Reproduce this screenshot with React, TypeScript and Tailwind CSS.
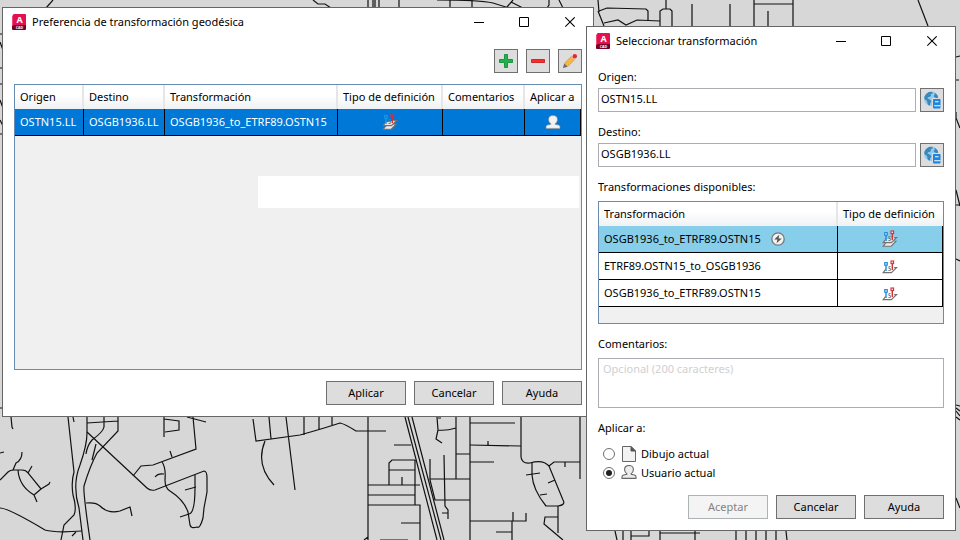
import React from "react";

const roads = [
    // top edge
    "M53 0L46 8", "M313 0L318 4L325 4L331 8", "M368 0V8M373 0V8M375 0V8M379 0V8M399 0V8M450 0V8M472 0V8",
    "M437 0Q480 0 493 3L509 8M513 0L507 7M511 2L523 8M549 0V5L547 8M559 0L563 8M598 0L599 12",
    "M598 11L604 26M599 11L607 8L646 9L648 11V20M604 23L618 20L626 25L637 20L660 21",
    "M660 26V11L663 9H670L672 11V26M666 0V9M692 4V26M730 4V26M754 0V26M768 11V26M793 0V26M754 4H793M918 0L928 26",
    // left and right edges
    "M0 34H3M0 42L3 50M0 68H3M0 84H3M0 100L3 108M0 120L3 126M0 134H3M0 408H3",
    "M956 57L960 56M956 80H959M956 112V118L960 128M956 190L960 206M956 205H960M956 259L960 261M956 405L960 406M956 408L960 411M956 411L960 416M956 417L960 420M956 498L960 508",
    // bottom left
    "M11 417L12 427L13 429M0 453L4 452M0 480L8 472Q10 470 14 470H22Q26 470 28 473L41 489L49 484L50 482M41 489L34 495Q19 486 18 470M13 470L16 463Q22 460 22 452M28 473L32 466M34 495L37 502",
    "M0 508Q8 508 45 530Q55 533 82 531M61 540L64 525L74 515Q77 508 73 495Q71 482 74 472L68 417M73 417L74 422M72 536L76 532",
    "M87 417V433Q87 445 80 465Q72 485 79 508L83 540M118 417V431L97 453Q90 466 84 486Q83 492 90 540M104 417V427Q103 432 92 440Q87 446 86 454M87 423L118 421M96 444L92 460",
    "M87 432L147 488Q150 491 155 490L204 471Q207 471 207 478L207 492L204 508L203 518Q200 529 197 527Q191 529 190 525L188 512Q184 500 170 491Q165 488 165 480Q166 467 162 462",
    "M133 476L141 466L153 465L196 449L193 417M170 451L172 457M155 477Q158 473 164 474M195 475V488Q195 513 189 514L180 517M185 490L196 487M187 417L206 422M164 417V437M164 419L179 421V430L165 432",
    "M86 503Q96 502 100 506Q108 514 120 511L130 507L132 516",
    "M253 419L256 441L300 435Q325 428 340 423Q345 424 356 431H386M269 417L271 439M286 417L295 490M265 441Q255 465 274 485M304 417V435M319 417V430M332 417V425",
    // bottom middle
    "M368 417V540M405 417L437 540M408 417L441 540M412 417L444 540M394 445H411M415 460H392L389 463V485M389 470H415M415 460V505M368 485H420M402 477V485M368 495H415M368 505H420V540M401 523H420M364 540L368 537M380 540H408",
    "M437 417L438 430Q446 431 456 428M438 430L436 439L442 443M438 418H441M456 417V479M456 454H470M470 417V540M430 459V480L435 500H470M430 479H470M444 455L445 506L448 510V519M442 513H448",
    "M470 423H515M470 445L521 446M488 441V446M470 462H494M470 521H526V513M512 521V540M513 512V521M496 532H512M521 417V457Q522 464 530 463Q543 459 549 466L563 500Q566 505 558 506H546Q533 490 532 475V463",
    "M549 466L554 462H580M565 462V467M580 417V479M558 506V533M558 517H545L544 524L563 540M526 475L540 473M548 483L555 480M540 495L547 494",
    // under the second window
    "M615 531L617 540M623 531V540M631 531V540M631 536H649V531M660 531V540M660 533H700M695 531V540M736 531V540M746 531V540M756 531V540M766 531V540M776 531V540M786 531L787 540",
];

const AppIcon = () => (
    <svg width="14" height="16" viewBox="0 0 14 16" aria-hidden="true">
        <path d="M0 2L2 0V13L0 14Z" fill="#f0487a" />
        <path d="M2 0H13Q14 0 14 1V11H1V1Z" fill="#e51050" />
        <path d="M0 12L2 11H14V15Q14 16 13 16H1Q0 16 0 15Z" fill="#780024" />
        <text x="7.5" y="9" textAnchor="middle" fontFamily="Noto Sans, sans-serif" fontWeight="700" fontSize="9" fill="#fff">A</text>
        <text x="7.5" y="14.8" textAnchor="middle" fontFamily="Noto Sans, sans-serif" fontWeight="700" fontSize="3.6" fill="#fff">CAD</text>
    </svg>
);

const TypeIcon = ({ layers, selected }: { layers?: boolean; selected?: boolean }) => (
    <svg className="inline-block align-middle" width="16" height={layers ? 18 : 14} viewBox={layers ? "0 0 16 18" : "0 0 16 14"} fill="none" aria-hidden="true">
        {layers && <path d="M3.6 13.4L1.2 16.2H9.2L14 11.2H12.5" fill="#eee" stroke="#77706c" strokeWidth="1.1" />}
        <path d="M3.5 9.5L1.2 12.6H9.4L14.6 7.6H12.2" fill={layers ? "#e6e6e6" : "#fff"} stroke="#77706c" strokeWidth="1.2" />
        <path d="M8.6 6.5H6.9V8.5H8.4V10.5H6.4" stroke="#777" strokeWidth="0.9" />
        <path d="M4 5V11" stroke={selected ? "#1c97ea" : "#1e88e0"} strokeWidth="1.4" />
        <rect x="2.7" y="2.6" width="2.6" height="2.6" fill={selected ? "#0078d7" : "#cfe8fa"} stroke={selected ? "#1c97ea" : "#1e88e0"} strokeWidth="1.1" />
        <path d="M10.3 4V10" stroke="#d13438" strokeWidth="1.4" />
        <rect x="9" y="1" width="2.6" height="2.6" fill={selected ? "#0078d7" : "#f9dcdc"} stroke="#d13438" strokeWidth="1.1" />
    </svg>
);

const UserIcon = ({ light }: { light?: boolean }) => (
    <svg className="inline-block align-middle" width="16" height="16" viewBox="0 1 16 16" aria-hidden="true">
        <path
            d="M8 1.5C5.2 1.5 3.6 3 3.6 5.4C3.6 7.4 4.6 8.8 5.8 9.6V10.4L2.6 11Q1 11.4 1 12.8V14.4H15V12.8Q15 11.4 13.4 11L10.2 10.4V9.6C11.4 8.8 12.4 7.4 12.4 5.4C12.4 3 10.8 1.5 8 1.5Z"
            fill={light ? "#f2f2f2" : "#ececec"}
            stroke={light ? "#9b8f86" : "#666"}
            strokeWidth={light ? "0.6" : "1.1"}
        />
    </svg>
);

const PageIcon = () => (
    <svg width="16" height="16" viewBox="0 0 16 16" aria-hidden="true">
        <path d="M1.5 0.5H10L14.5 5V15.5H1.5Z" fill="#f2f2f2" stroke="#666" />
        <path d="M10 0.5V5H14.5Z" fill="#555" stroke="#555" />
    </svg>
);

const GlobeIcon = () => (
    <svg width="18" height="18" viewBox="0 0 18 18" className="shrink-0" aria-hidden="true">
        <circle cx="8.2" cy="7.8" r="7.2" fill="#8ecbf4" />
        <path d="M1.2 6.2Q2.4 2.4 6 0.9L9.4 0.7L9.6 2.4L7.4 3.2L8.2 4.6L6.6 6L5 6.2L4.4 7.6L6.8 8.6L8.4 10.2L7.4 12L6.8 14.8Q4.6 14.2 4.4 12L4 9.8L1.8 8.4Z" fill="#3d87b5" />
        <path d="M11.4 1.4Q14.4 3 15.2 6.4L13.6 7.2L12 6.4L10.6 5.2L11.8 3.6Z" fill="#3d87b5" />
        <rect x="9" y="7" width="9" height="11" fill="#dcdcdc" />
        <rect x="10" y="8" width="7.5" height="9.4" rx="0.8" fill="#1a86e0" />
        <path d="M12 10.8H15.6M11.2 14.8H17.5" stroke="#fff" strokeWidth="1.1" />
    </svg>
);

const AutoIcon = () => (
    <svg width="14" height="14" viewBox="0 0 14 14" aria-hidden="true">
        <circle cx="7" cy="7" r="6.2" fill="#f2f2f2" stroke="#777" strokeWidth="1.3" />
        <path d="M8.3 2.8L3.2 7.6H6.4L5.6 11.2L10.8 6.4H7.6Z" fill="#555" />
    </svg>
);

const TitleBar = ({ title }: { title: string }) => (
    <header className="flex h-7 items-center pl-[9px]">
        <AppIcon />
        <h1 className="ml-[6px] grow">{title}</h1>
        <button aria-label="Minimizar" className="flex h-7 w-[46px] items-center justify-center">
            <svg width="11" height="11" viewBox="0 0 11 11"><path d="M1 5.5H11" stroke="#000" /></svg>
        </button>
        <button aria-label="Maximizar" className="flex h-7 w-[46px] items-center justify-center">
            <svg width="11" height="11" viewBox="0 0 11 11"><path d="M0.5 0.5H9.5V9.5H0.5Z" fill="none" stroke="#000" /></svg>
        </button>
        <button aria-label="Cerrar" className="flex h-7 w-[46px] items-center justify-center">
            <svg width="11" height="11" viewBox="0 0 11 11"><path d="M0.3 0.3L9.7 9.7M9.7 0.3L0.3 9.7" stroke="#000" strokeWidth="1.1" /></svg>
        </button>
    </header>
);

const iconButton = "flex size-6 shrink-0 items-center justify-center border border-[#707070] bg-[#dddddd]";
const button = "h-6 w-20 border border-[#707070] bg-[#dddddd] text-center disabled:border-[#adb2b5] disabled:bg-[#f4f4f4] disabled:text-[#838383]";
const th = "h-6 border-r-2 border-[#e6e6e8] pl-[5px] text-left font-normal last:border-r-0";
const td = "h-[27px] border-r border-b border-black";

const App = () => {
    return (
        <div className="relative min-h-screen overflow-hidden bg-[#d7d7d7] font-['Noto_Sans',sans-serif] text-[11px] leading-4 text-black">
            <svg className="absolute inset-0 size-full" viewBox="0 0 960 540" preserveAspectRatio="xMidYMid slice" fill="none" stroke="#111" strokeWidth="1.2" aria-hidden="true">
                {roads.map((d) => (
                    <path key={d} d={d} />
                ))}
            </svg>

            <section className="absolute top-[7px] left-[2px] w-[592px] border border-[#666] bg-white">
                <TitleBar title="Preferencia de transformación geodésica" />
                <div className="px-[11px] pt-[13px] pb-[11px]">
                    <div className="flex justify-end gap-2">
                        <button className={iconButton} aria-label="Añadir">
                            <svg width="14" height="14" viewBox="0 0 14 14">
                                <path d="M5.5 0.5H8.5V5.5H13.5V8.5H8.5V13.5H5.5V8.5H0.5V5.5H5.5Z" fill="#22b14c" stroke="#1d9540" />
                            </svg>
                        </button>
                        <button className={iconButton} aria-label="Quitar">
                            <svg width="14" height="14" viewBox="0 0 14 14">
                                <path d="M0.5 5.5H13.5V8.5H0.5Z" fill="#ff2a2a" stroke="#cf2a2a" />
                            </svg>
                        </button>
                        <button className={iconButton} aria-label="Editar">
                            <svg width="14" height="14" viewBox="0 0 14 14">
                                <path d="M0 14L1.2 9.5L4.5 12.8Z" fill="#666" />
                                <path d="M1.4 9.3L8.6 2.2L11.8 5.4L4.7 12.6Z" fill="#f7b544" stroke="#c48f35" strokeWidth="0.6" />
                                <path d="M8.6 2.2L9.6 1.2L12.8 4.4L11.8 5.4Z" fill="#e4e4e4" />
                                <circle cx="11.8" cy="2.2" r="2.2" fill="#e8262c" />
                            </svg>
                        </button>
                    </div>

                    <div className="mt-[11px] h-[286px] border border-[#688caf] bg-[#f0f0f0]">
                        <table className="w-full table-fixed border-separate border-spacing-0 whitespace-nowrap">
                            <colgroup>
                                <col className="w-[69px]" />
                                <col className="w-[81px]" />
                                <col className="w-[173px]" />
                                <col className="w-[105px]" />
                                <col className="w-[82px]" />
                                <col />
                            </colgroup>
                            <thead className="bg-linear-to-b from-white from-40% to-[#f0f1f3]">
                                <tr>
                                    <th scope="col" className={th}>Origen</th>
                                    <th scope="col" className={th}>Destino</th>
                                    <th scope="col" className={th}>Transformación</th>
                                    <th scope="col" className={th}>Tipo de definición</th>
                                    <th scope="col" className={th}>Comentarios</th>
                                    <th scope="col" className={th}>Aplicar a</th>
                                </tr>
                            </thead>
                            <tbody>
                                <tr className="bg-[#0078d7] text-white">
                                    <td className={`${td} pl-[5px]`}>OSTN15.LL</td>
                                    <td className={`${td} pl-[5px]`}>OSGB1936.LL</td>
                                    <td className={`${td} pl-[5px]`}>OSGB1936_to_ETRF89.OSTN15</td>
                                    <td className={`${td} text-center`}><TypeIcon layers selected /></td>
                                    <td className={td}></td>
                                    <td className={`${td} text-center`}><UserIcon light /></td>
                                </tr>
                            </tbody>
                        </table>
                        <div className="mt-10 mr-[2px] ml-[243px] h-8 bg-white"></div>
                    </div>

                    <div className="mt-[11px] flex justify-end gap-2">
                        <button className={button}>Aplicar</button>
                        <button className={button}>Cancelar</button>
                        <button className={button}>Ayuda</button>
                    </div>
                </div>
            </section>

            <section className="absolute top-[26px] left-[586px] w-[370px] border border-[#666] bg-white">
                <TitleBar title="Seleccionar transformación" />
                <div className="px-[11px] pt-[14px] pb-[11px]">
                    <label htmlFor="origen" className="block">Origen:</label>
                    <div className="mt-[3px] flex gap-1">
                        <input id="origen" defaultValue="OSTN15.LL" className="h-6 min-w-0 grow border border-[#abadb3] px-[2px] pb-1" />
                        <button className={iconButton} aria-label="Elegir origen"><GlobeIcon /></button>
                    </div>

                    <label htmlFor="destino" className="mt-3 block">Destino:</label>
                    <div className="mt-[3px] flex gap-1">
                        <input id="destino" defaultValue="OSGB1936.LL" className="h-6 min-w-0 grow border border-[#abadb3] px-[2px] pb-1" />
                        <button className={iconButton} aria-label="Elegir destino"><GlobeIcon /></button>
                    </div>

                    <h2 id="disponibles" className="mt-3">Transformaciones disponibles:</h2>
                    <div className="mt-[6px] border border-[#688caf] bg-[#f0f0f0] pb-4">
                        <table aria-labelledby="disponibles" className="w-full table-fixed border-separate border-spacing-0 whitespace-nowrap">
                            <colgroup>
                                <col />
                                <col className="w-[105px]" />
                            </colgroup>
                            <thead className="bg-linear-to-b from-white from-40% to-[#f0f1f3]">
                                <tr>
                                    <th scope="col" className={th}>Transformación</th>
                                    <th scope="col" className={th}>Tipo de definición</th>
                                </tr>
                            </thead>
                            <tbody>
                                <tr className="bg-[#87ceeb]">
                                    <td className={`${td} pl-[5px]`}>
                                        <div className="flex items-center gap-[10px]">OSGB1936_to_ETRF89.OSTN15 <AutoIcon /></div>
                                    </td>
                                    <td className={`${td} text-center`}><TypeIcon layers /></td>
                                </tr>
                                <tr className="bg-white">
                                    <td className={`${td} pl-[5px]`}>ETRF89.OSTN15_to_OSGB1936</td>
                                    <td className={`${td} text-center`}><TypeIcon /></td>
                                </tr>
                                <tr className="bg-white">
                                    <td className={`${td} pl-[5px]`}>OSGB1936_to_ETRF89.OSTN15</td>
                                    <td className={`${td} text-center`}><TypeIcon /></td>
                                </tr>
                            </tbody>
                        </table>
                    </div>

                    <label htmlFor="comentarios" className="mt-3 block">Comentarios:</label>
                    <textarea
                        id="comentarios"
                        placeholder="Opcional (200 caracteres)"
                        className="mt-[6px] block h-[50px] w-full resize-none border border-[#abadb3] px-1 py-[2px] placeholder:text-[#d0d0d0]"
                    />

                    <fieldset className="mt-3">
                        <legend className="mb-2">Aplicar a:</legend>
                        <label className="flex h-[19px] items-center pl-[5px]">
                            <input type="radio" name="aplicar" className="mr-[6px] flex size-3 appearance-none items-center justify-center rounded-full border border-[#707070] bg-white before:size-[6px] before:rounded-full checked:before:bg-[#212121]" />
                            <PageIcon />
                            <span className="ml-1">Dibujo actual</span>
                        </label>
                        <label className="flex h-[19px] items-center pl-[5px]">
                            <input type="radio" name="aplicar" defaultChecked className="mr-[6px] flex size-3 appearance-none items-center justify-center rounded-full border border-[#707070] bg-white before:size-[6px] before:rounded-full checked:before:bg-[#212121]" />
                            <UserIcon />
                            <span className="ml-1">Usuario actual</span>
                        </label>
                    </fieldset>

                    <div className="mt-[13px] flex justify-end gap-2">
                        <button className={button} disabled>Aceptar</button>
                        <button className={button}>Cancelar</button>
                        <button className={button}>Ayuda</button>
                    </div>
                </div>
            </section>
        </div>
    );
};

export default App;
